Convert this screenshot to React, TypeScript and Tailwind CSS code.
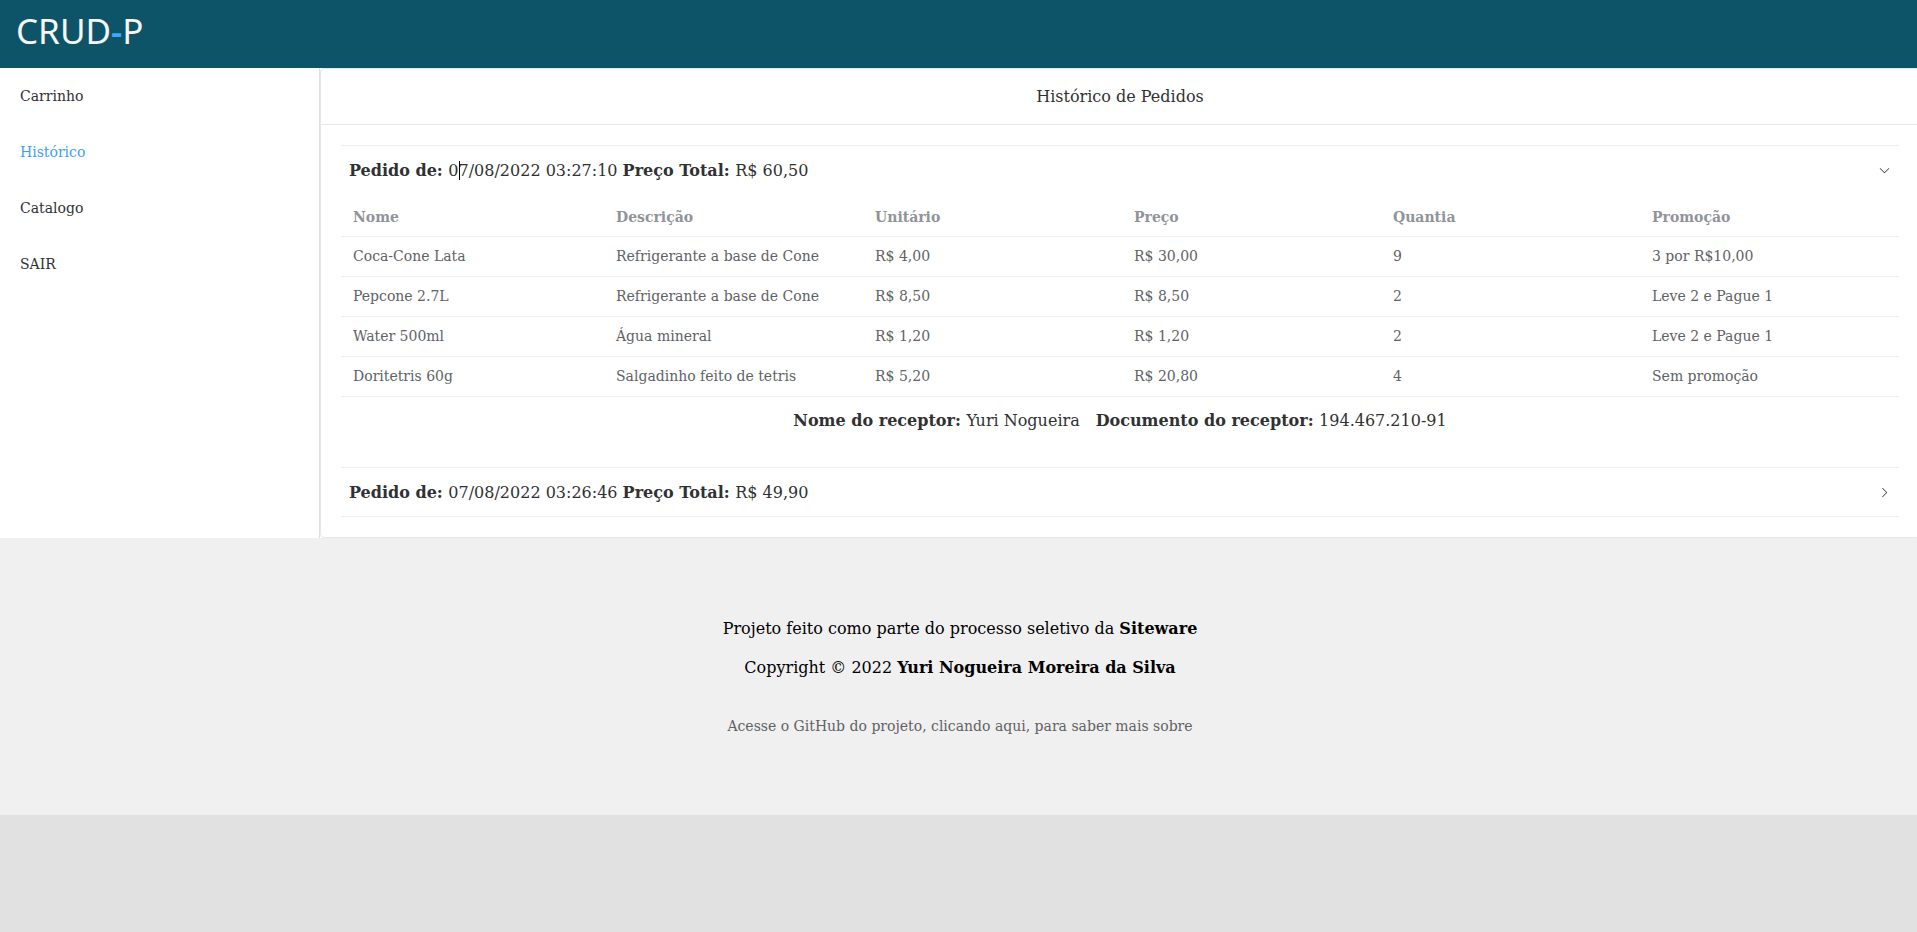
import { useState } from "react";

type Item = {
  name: string;
  description: string;
  unit: string;
  price: string;
  amount: number;
  promotion: string;
};

type Order = {
  date: string;
  total: string;
  receiver: string;
  document: string;
  items: Item[];
};

const columns = ["Nome", "Descrição", "Unitário", "Preço", "Quantia", "Promoção"];

const orders: Order[] = [
  {
    date: "07/08/2022 03:27:10",
    total: "R$ 60,50",
    receiver: "Yuri Nogueira",
    document: "194.467.210-91",
    items: [
      { name: "Coca-Cone Lata", description: "Refrigerante a base de Cone", unit: "R$ 4,00", price: "R$ 30,00", amount: 9, promotion: "3 por R$10,00" },
      { name: "Pepcone 2.7L", description: "Refrigerante a base de Cone", unit: "R$ 8,50", price: "R$ 8,50", amount: 2, promotion: "Leve 2 e Pague 1" },
      { name: "Water 500ml", description: "Água mineral", unit: "R$ 1,20", price: "R$ 1,20", amount: 2, promotion: "Leve 2 e Pague 1" },
      { name: "Doritetris 60g", description: "Salgadinho feito de tetris", unit: "R$ 5,20", price: "R$ 20,80", amount: 4, promotion: "Sem promoção" },
    ],
  },
  {
    date: "07/08/2022 03:26:46",
    total: "R$ 49,90",
    receiver: "Yuri Nogueira",
    document: "194.467.210-91",
    items: [],
  },
];

const menu = ["Carrinho", "Histórico", "Catalogo", "SAIR"];

function Arrow({ open }: { open: boolean }) {
  return (
    <svg viewBox="0 0 1024 1024" className={open ? "size-[13px] rotate-90" : "size-[13px]"} fill="currentColor" aria-hidden="true">
      <path d="M340.864 149.312a30.592 30.592 0 0 0 0 42.752L652.736 512 340.864 831.872a30.592 30.592 0 0 0 0 42.752 29.12 29.12 0 0 0 41.728 0L714.24 534.336a32 32 0 0 0 0-44.672L382.592 149.376a29.12 29.12 0 0 0-41.728 0z" />
    </svg>
  );
}

function Caret() {
  return (
    <span className="relative" aria-hidden="true">
      <span className="absolute top-0 left-0 h-[19px] w-px bg-black" />
    </span>
  );
}

function OrderTable({ items }: { items: Item[] }) {
  return (
    <table className="w-full table-fixed border-separate border-spacing-0 text-left text-sm leading-[23px] text-[#606266]">
      <thead className="text-[#909399]">
        <tr>
          {columns.map((column) => (
            <th key={column} scope="col" className="border-b border-[#ebeef5] px-3 pt-2 pb-[7px] font-bold first:w-[263px]">
              {column}
            </th>
          ))}
        </tr>
      </thead>
      <tbody>
        {items.map((item) => (
          <tr key={item.name}>
            {[item.name, item.description, item.unit, item.price, item.amount, item.promotion].map((value, i) => (
              <td key={columns[i]} className="border-b border-[#ebeef5] px-3 py-2">
                {value}
              </td>
            ))}
          </tr>
        ))}
      </tbody>
    </table>
  );
}

function OrderPanel({ order, open, caret, onToggle }: { order: Order; open: boolean; caret: boolean; onToggle: () => void }) {
  return (
    <section className="border-b border-[#ebeef5]">
      <button type="button" onClick={onToggle} aria-expanded={open} className="flex h-12 w-full items-center justify-between px-2 text-left">
        <span>
          <b>Pedido de: </b>
          {order.date.slice(0, 1)}
          {caret && <Caret />}
          {order.date.slice(1)} <b>Preço Total: </b>
          {order.total}
        </span>
        <Arrow open={open} />
      </button>
      {open && (
        <div className="pt-1 pb-[25px]">
          <OrderTable items={order.items} />
          <p className="flex justify-center gap-4 pt-3 pb-[9px] leading-6">
            <span>
              <b>Nome do receptor: </b>
              {order.receiver}
            </span>
            <span>
              <b>Documento do receptor: </b>
              {order.document}
            </span>
          </p>
        </div>
      )}
    </section>
  );
}

export default function App() {
  const [openDate, setOpenDate] = useState<string | null>(orders[0].date);

  return (
    <div className="min-h-screen overflow-x-hidden bg-[#e1e1e1] font-['DejaVu_Serif',serif] text-base leading-[19px] text-[#303133]">
      <div className="-mr-[3px]">
        <header className="flex h-[68px] items-start bg-[#0e5469] px-4 pt-[11px]">
          <a href="#" className="font-['Noto_Sans',sans-serif] text-[35px] leading-10 text-[#f5f5f5]">
            CRUD<span className="font-semibold text-[#3ba9ff]">-</span>P
          </a>
        </header>

        <div className="flex bg-white">
          <nav className="w-80 shrink-0 border-r border-[#dcdfe6]">
            <ul className="text-sm leading-14">
              {menu.map((label) => (
                <li key={label}>
                  <a href="#" className={label === "Histórico" ? "block px-5 text-[#409eff]" : "block px-5"}>
                    {label}
                  </a>
                </li>
              ))}
            </ul>
          </nav>

          <main className="min-w-0 grow rounded-sm border border-[#e4e7ed]">
            <h1 className="border-b border-[#e4e7ed] py-[18px] text-center">Histórico de Pedidos</h1>
            <div className="p-5">
              <div className="border-t border-[#ebeef5]">
                {orders.map((order, i) => (
                  <OrderPanel
                    key={order.date}
                    order={order}
                    caret={i === 0}
                    open={openDate === order.date}
                    onToggle={() => setOpenDate(openDate === order.date ? null : order.date)}
                  />
                ))}
              </div>
            </div>
          </main>
        </div>

        <footer className="flex flex-col items-center bg-[#f0f0f0] pt-[81px] pb-[79px] text-black">
          <p>
            Projeto feito como parte do processo seletivo da <b>Siteware</b>
          </p>
          <p className="pt-5">
            Copyright © 2022 <b>Yuri Nogueira Moreira da Silva</b>
          </p>
          <a href="#" className="pt-[39px] text-sm text-[#606266]">
            Acesse o GitHub do projeto, clicando aqui, para saber mais sobre
          </a>
        </footer>
      </div>
    </div>
  );
}
